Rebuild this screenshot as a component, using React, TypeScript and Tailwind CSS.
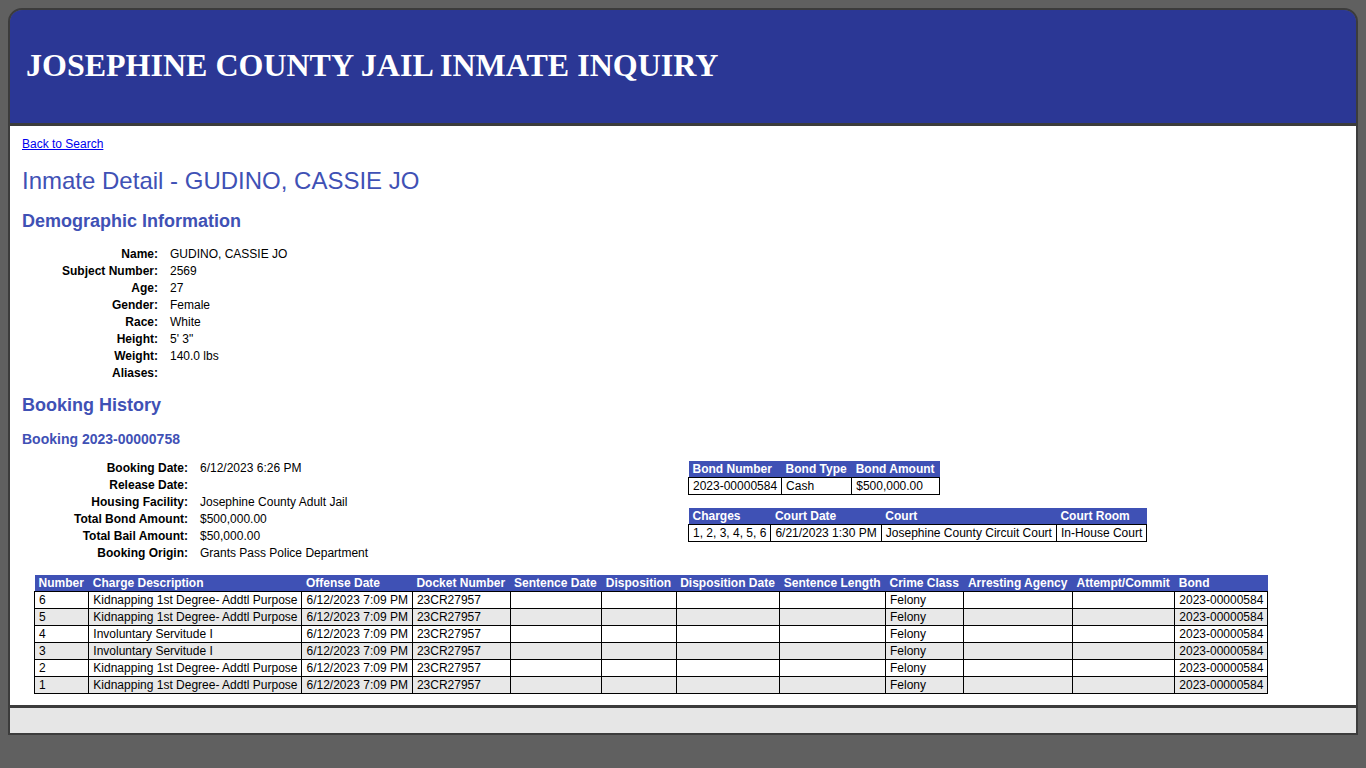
import React from 'react';

const demographics: [string, string][] = [
  ['Name:', 'GUDINO, CASSIE JO'],
  ['Subject Number:', '2569'],
  ['Age:', '27'],
  ['Gender:', 'Female'],
  ['Race:', 'White'],
  ['Height:', `5' 3"`],
  ['Weight:', '140.0 lbs'],
  ['Aliases:', ''],
];

const booking: [string, string][] = [
  ['Booking Date:', '6/12/2023 6:26 PM'],
  ['Release Date:', ''],
  ['Housing Facility:', 'Josephine County Adult Jail'],
  ['Total Bond Amount:', '$500,000.00'],
  ['Total Bail Amount:', '$50,000.00'],
  ['Booking Origin:', 'Grants Pass Police Department'],
];

const chargeCols = [
  'Number',
  'Charge Description',
  'Offense Date',
  'Docket Number',
  'Sentence Date',
  'Disposition',
  'Disposition Date',
  'Sentence Length',
  'Crime Class',
  'Arresting Agency',
  'Attempt/Commit',
  'Bond',
];

const KID = 'Kidnapping 1st Degree- Addtl Purpose';
const INV = 'Involuntary Servitude I';

const charges = [
  ['6', KID],
  ['5', KID],
  ['4', INV],
  ['3', INV],
  ['2', KID],
  ['1', KID],
].map(([n, d]) => [n, d, '6/12/2023 7:09 PM', '23CR27957', '', '', '', '', 'Felony', '', '', '2023-00000584']);

const th = 'bg-[#3f51b5] text-white font-bold text-left pl-[4px] pr-[5px] leading-[16px] whitespace-nowrap';
const td = 'border border-black px-[4px] leading-[16px] whitespace-nowrap';

function InfoTable({ rows, labelWidth }: { rows: [string, string][]; labelWidth: string }) {
  return (
    <div className="flex flex-col">
      {rows.map(([label, value]) => (
        <div key={label} className="flex h-[17px] items-center">
          <div className={`${labelWidth} text-right font-bold`}>{label}</div>
          <div className="pl-[12px]">{value}</div>
        </div>
      ))}
    </div>
  );
}

function SmallTable({ cols, row }: { cols: string[]; row: string[] }) {
  return (
    <table className="border-collapse">
      <thead>
        <tr>
          {cols.map((c) => (
            <th key={c} className={th}>{c}</th>
          ))}
        </tr>
      </thead>
      <tbody>
        <tr>
          {row.map((v, i) => (
            <td key={i} className={td}>{v}</td>
          ))}
        </tr>
      </tbody>
    </table>
  );
}

export default function App() {
  return (
    <div className="min-h-screen bg-[#606060] p-[8px] text-[12px] text-black" style={{ fontFamily: '"Liberation Sans", Arial, sans-serif' }}>
      <div className="border-2 border-[#3c3c3c] rounded-t-[14px] overflow-hidden">
        {/* Header */}
        <div className="bg-[#2b3795] h-[116px] flex items-center px-[16px] pb-[4px] border-b-[3px] border-[#3c3c3c]">
          <h1
            className="text-white font-bold text-[32px] leading-none"
            style={{ fontFamily: '"Liberation Serif", "Times New Roman", serif' }}
          >
            JOSEPHINE COUNTY JAIL INMATE INQUIRY
          </h1>
        </div>

        {/* Content */}
        <div className="bg-white px-[12px] pt-[9px] pb-[11px]">
          <a href="#" className="text-[#0000ee] underline">Back to Search</a>

          <h2 className="text-[#3f51b5] text-[24px] leading-[28px] mt-[14px]">Inmate Detail - GUDINO, CASSIE JO</h2>

          <h3 className="text-[#3f51b5] text-[18px] font-bold leading-[22px] mt-[15px]">Demographic Information</h3>
          <div className="mt-[13px]">
            <InfoTable rows={demographics} labelWidth="w-[136px]" />
          </div>

          <h3 className="text-[#3f51b5] text-[18px] font-bold leading-[22px] mt-[13px]">Booking History</h3>
          <h4 className="text-[#3f51b5] text-[14px] font-bold leading-[18px] mt-[14px]">Booking 2023-00000758</h4>

          <div className="flex mt-[10px]">
            <div className="w-[666px] pt-[1px]">
              <InfoTable rows={booking} labelWidth="w-[166px]" />
            </div>
            <div className="flex flex-col items-start gap-[13px] pt-[3px]">
              <SmallTable cols={['Bond Number', 'Bond Type', 'Bond Amount']} row={['2023-00000584', 'Cash', '$500,000.00']} />
              <SmallTable
                cols={['Charges', 'Court Date', 'Court', 'Court Room']}
                row={['1, 2, 3, 4, 5, 6', '6/21/2023 1:30 PM', 'Josephine County Circuit Court', 'In-House Court']}
              />
            </div>
          </div>

          <div className="mt-[14px] ml-[12px]">
            <table className="border-collapse">
              <thead>
                <tr>
                  {chargeCols.map((c) => (
                    <th key={c} className={th}>{c}</th>
                  ))}
                </tr>
              </thead>
              <tbody>
                {charges.map((r, i) => (
                  <tr key={i} className={i % 2 === 0 ? 'bg-white' : 'bg-[#e8e8e8]'}>
                    {r.map((v, j) => (
                      <td key={j} className={td}>{v}</td>
                    ))}
                  </tr>
                ))}
              </tbody>
            </table>
          </div>
        </div>

        {/* Footer */}
        <div className="bg-[#e6e6e6] h-[28px] border-t-[3px] border-[#3c3c3c]" />
      </div>
    </div>
  );
}
